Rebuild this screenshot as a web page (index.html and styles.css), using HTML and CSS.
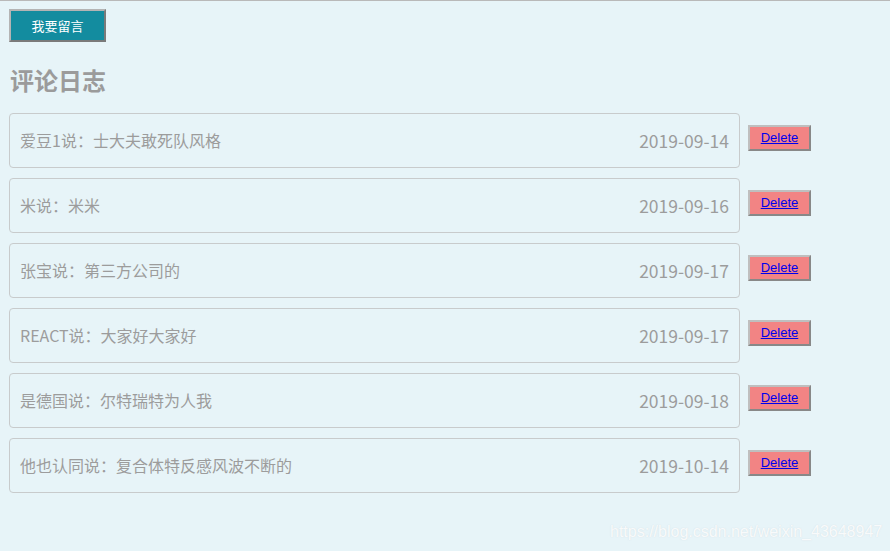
FILE: index.html
```html
<!DOCTYPE html>
<html>
<head>
<meta charset="utf-8">
<link rel="stylesheet" href="styles.css">
</head>
<body>
<div class="page">
  <button class="add-btn">我要留言</button>
  <h2 class="title">评论日志</h2>
  <ul class="list">
    <li class="row"><div class="item"><span class="msg">爱豆1说：士大夫敢死队风格</span><span class="date">2019-09-14</span></div><button class="del"><a href="#">Delete</a></button></li>
    <li class="row"><div class="item"><span class="msg">米说：米米</span><span class="date">2019-09-16</span></div><button class="del"><a href="#">Delete</a></button></li>
    <li class="row"><div class="item"><span class="msg">张宝说：第三方公司的</span><span class="date">2019-09-17</span></div><button class="del"><a href="#">Delete</a></button></li>
    <li class="row"><div class="item"><span class="msg">REACT说：大家好大家好</span><span class="date">2019-09-17</span></div><button class="del"><a href="#">Delete</a></button></li>
    <li class="row"><div class="item"><span class="msg">是德国说：尔特瑞特为人我</span><span class="date">2019-09-18</span></div><button class="del"><a href="#">Delete</a></button></li>
    <li class="row"><div class="item"><span class="msg">他也认同说：复合体特反感风波不断的</span><span class="date">2019-10-14</span></div><button class="del"><a href="#">Delete</a></button></li>
  </ul>
  <div class="watermark">https://blog.csdn.net/weixin_43648947</div>
</div>
</body>
</html>
```
FILE: styles.css
```css
html, body {
  margin: 0;
  padding: 0;
  background: #e7f4f8;
  height: 100%;
}
body {
  font-family: "Noto Sans CJK SC", "Liberation Sans", sans-serif;
}
.page {
  position: relative;
  height: 100%;
  box-sizing: border-box;
  border-top: 1px solid #b9b9b9;
  padding: 8px 0 0 9px;
}
.add-btn {
  display: block;
  width: 97px;
  height: 33px;
  margin-left: 0;
  background: #138c9f;
  color: #fff;
  border: 2px solid;
  border-color: #b4b4b4 #7a7a7a #7a7a7a #b4b4b4;
  font-family: "Noto Sans CJK SC", sans-serif;
  font-size: 13px;
  padding: 0;
}
.title {
  margin: 22px 0 0 1px;
  font-size: 24px;
  line-height: 32px;
  height: 32px;
  font-weight: bold;
  color: #9b9b9b;
}
.list {
  list-style: none;
  margin: 17px 0 0 0;
  padding: 0;
}
.row {
  display: flex;
  align-items: flex-start;
  gap: 8px;
  margin-bottom: 10px;
}
.item {
  box-sizing: border-box;
  width: 731px;
  height: 55px;
  border: 1px solid #c8cbcc;
  border-radius: 4px;
  display: flex;
  align-items: center;
  justify-content: space-between;
  padding: 0 10px 1px 10px;
  color: #9c9c9c;
  font-size: 16px;
}
.date {
  font-size: 17.5px;
  font-family: "Noto Sans CJK SC", sans-serif;
}
.del {
  margin-top: 12px;
  width: 63px;
  height: 26px;
  background: #f28484;
  border: 2px solid;
  border-color: #bfbfbf #888 #888 #bfbfbf;
  padding: 0 0 1px 0;
  font-family: "Liberation Sans", sans-serif;
  font-size: 13px;
}
.del a {
  color: #0000ee;
  text-decoration: underline;
}
.watermark {
  position: absolute;
  left: 610px;
  top: 522px;
  font-family: "Liberation Sans", sans-serif;
  font-size: 16px;
  color: rgba(255,255,255,0.85);
  text-shadow: 0 0 1px rgba(190,200,205,0.5);
}
```
